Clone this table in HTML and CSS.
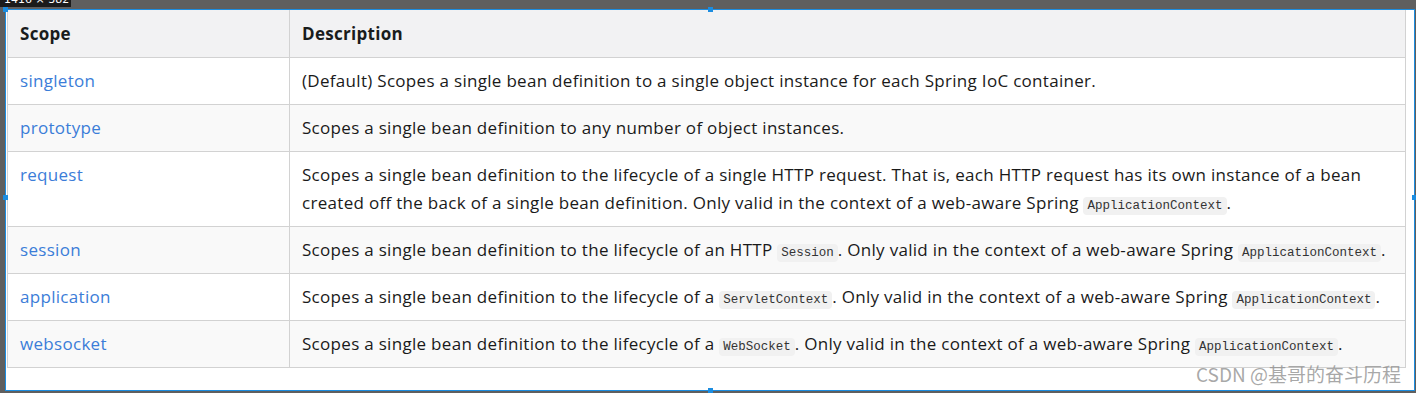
FILE: index.html
```html
<!DOCTYPE html>
<html lang="en">
<head>
  <meta charset="UTF-8" />
  <title>Bean Scopes</title>
  <link rel="stylesheet" href="styles.css">
</head>
<body>

  <div class="etiqueta">1416 × 382</div>

  <div class="marco">
    <span class="asa asa-arriba"></span>
    <span class="asa asa-abajo"></span>
    <span class="asa asa-izq"></span>
    <span class="asa asa-der"></span>
    <span class="asa asa-esq"></span>

    <table class="tabla">
      <thead>
        <tr>
          <th class="col-scope">Scope</th>
          <th>Description</th>
        </tr>
      </thead>
      <tbody>
        <tr>
          <td><a href="#">singleton</a></td>
          <td>(Default) Scopes a single bean definition to a single object instance for each Spring IoC container.</td>
        </tr>
        <tr>
          <td><a href="#">prototype</a></td>
          <td>Scopes a single bean definition to any number of object instances.</td>
        </tr>
        <tr>
          <td><a href="#">request</a></td>
          <td>Scopes a single bean definition to the lifecycle of a single HTTP request. That is, each HTTP request has its own instance of a bean created off the back of a single bean definition. Only valid in the context of a web-aware Spring <code>ApplicationContext</code>.</td>
        </tr>
        <tr>
          <td><a href="#">session</a></td>
          <td>Scopes a single bean definition to the lifecycle of an HTTP <code>Session</code>. Only valid in the context of a web-aware Spring <code>ApplicationContext</code>.</td>
        </tr>
        <tr>
          <td><a href="#">application</a></td>
          <td>Scopes a single bean definition to the lifecycle of a <code>ServletContext</code>. Only valid in the context of a web-aware Spring <code>ApplicationContext</code>.</td>
        </tr>
        <tr>
          <td><a href="#">websocket</a></td>
          <td>Scopes a single bean definition to the lifecycle of a <code>WebSocket</code>. Only valid in the context of a web-aware Spring <code>ApplicationContext</code>.</td>
        </tr>
      </tbody>
    </table>

    <div class="marca">CSDN @基哥的奋斗历程</div>
  </div>

</body>
</html>
```

FILE: styles.css
```css
/* Base */
* {
  margin: 0;
  padding: 0;
  box-sizing: border-box;
}

body {
  width: 1416px;
  height: 393px;
  background: #5f5f5f;
  font-family: 'Open Sans', sans-serif;
  color: #1a1a1a;
  overflow: hidden;
  position: relative;
}

/* Etiqueta negra del recorte (arriba a la izquierda) */
.etiqueta {
  position: absolute;
  top: -7px;
  left: 0;
  width: 71px;
  height: 14px;
  background: #1b1b1b;
  color: #fff;
  font-family: 'DejaVu Sans', sans-serif;
  font-size: 11px;
  line-height: 14px;
  padding-left: 4px;
  z-index: 5;
}

/* Marco de seleccion */
.marco {
  position: relative;
  margin: 9px 0 0 5px;
  width: 1410px;
  height: 382px;
  background: #fff;
  border: 1px solid #1c8de0;
  padding-left: 1px;
}

.asa {
  position: absolute;
  width: 5px;
  height: 5px;
  background: #1c8de0;
  z-index: 3;
}
.asa-arriba { top: -3px; left: 702px; }
.asa-abajo { bottom: -3px; left: 702px; }
.asa-izq { left: -3px; top: 185px; }
.asa-der { right: -3px; top: 185px; }
.asa-esq { left: -3px; top: -3px; }

/* Tabla */
.tabla {
  width: 1399px;
  border-collapse: collapse;
  font-size: 17px;
  letter-spacing: 0.3px;
  line-height: 28px;
}

.tabla th,
.tabla td {
  border: 1px solid #d2d2d2;
  padding: 9px 12px;
  text-align: left;
  vertical-align: top;
}

.tabla th {
  background: #f2f2f3;
  font-weight: 700;
  color: #191c1c;
  border-top: none;
  padding-top: 10px;
}

.col-scope {
  width: 282px;
}

.tabla tbody tr:nth-child(even) {
  background: #f9f9f9;
}

.tabla a {
  color: #3b7dd8;
  text-decoration: none;
}

.tabla code {
  font-family: 'Liberation Mono', monospace;
  font-size: 12.5px;
  letter-spacing: 0;
  line-height: 1;
  background: #f1f1f1;
  color: #333;
  padding: 2px 4px;
  border-radius: 4px;
}

/* Marca de agua */
.marca {
  position: absolute;
  right: 13px;
  bottom: 4px;
  font-family: 'Noto Sans CJK SC', sans-serif;
  font-size: 19px;
  line-height: 24px;
  color: rgba(140, 140, 140, 0.75);
  z-index: 2;
}
```
